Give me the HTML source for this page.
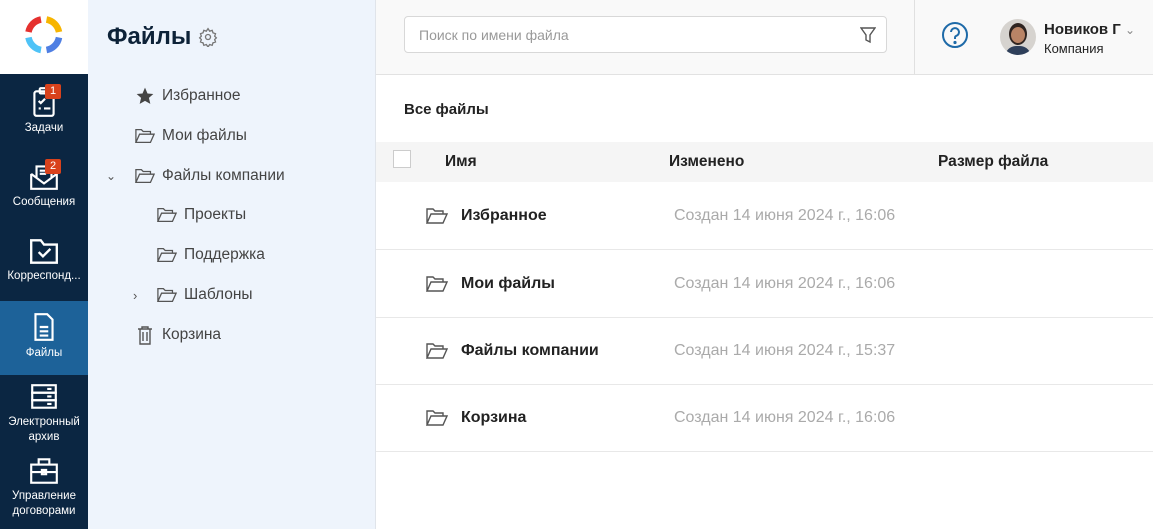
<!DOCTYPE html>
<html><head><meta charset="utf-8"><style>
*{box-sizing:border-box;margin:0;padding:0}
body{width:1153px;height:529px;overflow:hidden;font-family:"Liberation Sans",sans-serif;background:#fff;position:relative;color:#222}
.nav{position:absolute;left:0;top:0;width:88px;height:529px;background:#0b2642}
.logo{height:74px;background:#fff;position:relative}
.ni{position:absolute;left:0;width:88px;text-align:center;color:#fff;font-size:11.5px;line-height:15px}
.ni svg{display:block;margin:0 auto 3px}
.badge{position:absolute;left:45px;width:16px;height:15px;background:#d9421c;color:#fff;font-size:11px;line-height:15px;border-radius:2px;text-align:center}
.tree{position:absolute;left:88px;top:0;width:288px;height:529px;background:#eef4fc;border-right:1px solid #e0e4ea}
.tree h1{position:absolute;left:19px;top:23px;font-size:24px;font-weight:bold;color:#0d2238}
.ti{position:absolute;font-size:15.5px;color:#444;display:flex;align-items:center;gap:7px;height:20px}
.main{position:absolute;left:376px;top:0;right:0;bottom:0}
.top{height:75px;background:#f9f9f9;border-bottom:1px solid #e2e2e2;position:relative}
.search{position:absolute;left:28px;top:16px;width:483px;height:37px;border:1px solid #d8d8d8;border-radius:4px;background:#fff;font-size:14px;color:#999;padding:10px 14px}
.sep{position:absolute;left:538px;top:0;width:1px;height:74px;background:#e0e0e0}
.row{position:absolute;left:0;right:0;height:68px;border-bottom:1px solid #e8e8e8}
.rn{position:absolute;left:85px;top:25px;font-size:16px;font-weight:bold;color:#222}
.rd{position:absolute;left:298px;top:25px;font-size:16px;color:#aaa}
.rf{position:absolute;left:50px;top:26px}
</style></head><body>
<div class="nav">
 <div class="logo"><svg width="88" height="74" viewBox="0 0 88 74"><g fill="none" stroke-width="6.5"><path d="M28.5 32 A15.5 15.5 0 0 1 41 19.5" stroke="#e5312f"/><path d="M46.5 19.5 A15.5 15.5 0 0 1 59 32" stroke="#f7b500"/><path d="M59 37.5 A15.5 15.5 0 0 1 46.5 50" stroke="#4f7fe3"/><path d="M41 50 A15.5 15.5 0 0 1 28.5 37.5" stroke="#4fc3f7"/></g></svg></div>
 <div class="ni" style="top:86px"><svg width="28" height="32" viewBox="0 0 26 30" fill="none" stroke="#fff" stroke-width="2"><rect x="4" y="5" width="18" height="23" rx="2"/><rect x="9" y="2" width="8" height="5" rx="1"/><path d="M8 14l2 2 4-4M8 21h2M13 21h6"/></svg>Задачи</div>
 <div class="badge" style="top:84px">1</div>
 <div class="ni" style="top:160px"><svg width="32" height="32" viewBox="0 0 30 30" fill="none" stroke="#fff" stroke-width="2"><path d="M3 13v14h24V13"/><path d="M3 13l12 9 12-9"/><path d="M8 16V6h14v10M11 10h8M11 13h6"/></svg>Сообщения</div>
 <div class="badge" style="top:159px">2</div>
 <div class="ni" style="top:236px"><svg width="32" height="30" viewBox="0 0 30 28" fill="none" stroke="#fff" stroke-width="2.2"><path d="M3 4h9l3 4h12v17H3z"/><path d="M10 15l4 4 7-7"/></svg>Корреспонд...</div>
 <div style="position:absolute;top:301px;width:88px;height:74px;background:#1d6299"></div>
 <div class="ni" style="top:311px"><svg width="24" height="32" viewBox="0 0 22 30" fill="none" stroke="#fff" stroke-width="2"><path d="M3 3h11l5 5v19H3z"/><path d="M7 15h8M7 19h8M7 23h8"/></svg>Файлы</div>
 <div class="ni" style="top:382px"><svg width="30" height="30" viewBox="0 0 28 28" fill="none" stroke="#fff" stroke-width="2"><rect x="3" y="3" width="22" height="7"/><rect x="3" y="10" width="22" height="7"/><rect x="3" y="17" width="22" height="7"/><path d="M17 6.5h4M17 13.5h4M17 20.5h4"/></svg>Электронный<br>архив</div>
 <div class="ni" style="top:456px"><svg width="32" height="30" viewBox="0 0 30 28" fill="none" stroke="#fff" stroke-width="2"><rect x="3" y="8" width="24" height="17"/><path d="M10 8V3h10v5M3 15h24"/><rect x="13" y="13" width="4" height="4"/></svg>Управление<br>договорами</div>
</div>
<div class="tree">
 <h1>Файлы</h1>
 <svg style="position:absolute;left:110px;top:27px" width="20" height="20" viewBox="0 0 24 24" fill="none" stroke="#777" stroke-width="1.6"><circle cx="12" cy="12" r="3"/><path d="M12 2l2 3 3-1 1 3 3 1-1 3 2 2-2 2 1 3-3 1-1 3-3-1-2 3-2-3-3 1-1-3-3-1 1-3-2-2 2-2-1-3 3-1 1-3 3 1z"/></svg>
 <div class="ti" style="left:47px;top:86px"><svg width="20" height="20" viewBox="0 0 24 24" fill="#444"><path d="M12 2l3 7 7 .6-5.3 4.7 1.7 7.2L12 17.8 5.6 21.5l1.7-7.2L2 9.6 9 9z"/></svg>Избранное</div>
 <div class="ti" style="left:47px;top:126px"><svg width="20" height="16" viewBox="0 0 22 16" fill="none" stroke="#555" stroke-width="1.4"><path d="M1 15V1h6l2 2h8v3M1 15l4-9h16l-4 9z"/></svg>Мои файлы</div>
 <div class="ti" style="left:18px;top:166px"><span style="width:22px;color:#555;font-size:12px">&#8964;</span><svg width="20" height="16" viewBox="0 0 22 16" fill="none" stroke="#555" stroke-width="1.4"><path d="M1 15V1h6l2 2h8v3M1 15l4-9h16l-4 9z"/></svg>Файлы компании</div>
 <div class="ti" style="left:69px;top:205px"><svg width="20" height="16" viewBox="0 0 22 16" fill="none" stroke="#555" stroke-width="1.4"><path d="M1 15V1h6l2 2h8v3M1 15l4-9h16l-4 9z"/></svg>Проекты</div>
 <div class="ti" style="left:69px;top:245px"><svg width="20" height="16" viewBox="0 0 22 16" fill="none" stroke="#555" stroke-width="1.4"><path d="M1 15V1h6l2 2h8v3M1 15l4-9h16l-4 9z"/></svg>Поддержка</div>
 <div class="ti" style="left:45px;top:285px"><span style="width:17px;color:#555;font-size:13px">&#8250;</span><svg width="20" height="16" viewBox="0 0 22 16" fill="none" stroke="#555" stroke-width="1.4"><path d="M1 15V1h6l2 2h8v3M1 15l4-9h16l-4 9z"/></svg>Шаблоны</div>
 <div class="ti" style="left:47px;top:325px"><svg width="20" height="20" viewBox="0 0 20 20" fill="none" stroke="#555" stroke-width="1.4"><path d="M3 4h14M7 4V2h6v2M5 4v15h10V4M8 7v9M12 7v9"/></svg>Корзина</div>
</div>
<div class="main">
 <div class="top">
  <div class="search">Поиск по имени файла
   <svg style="position:absolute;right:10px;top:9px" width="16" height="18" viewBox="0 0 16 18" fill="none" stroke="#555" stroke-width="1.4"><path d="M1 2h14l-5 7v7l-4-2V9z"/></svg></div>
  <div class="sep"></div>
  <svg style="position:absolute;left:565px;top:21px" width="28" height="28" viewBox="0 0 28 28" fill="none" stroke="#1e6aa8" stroke-width="2"><circle cx="14" cy="14" r="12"/><path d="M10 11a4 4 0 1 1 5 4c-1 .5-1 1-1 3"/><circle cx="14" cy="21.5" r=".6" fill="#1e6aa8"/></svg>
  <div style="position:absolute;left:624px;top:19px;width:36px;height:36px;border-radius:50%;background:#d6d3cf;overflow:hidden">
   <div style="position:absolute;left:9px;top:4px;width:18px;height:22px;border-radius:50%;background:#2f2420"></div>
   <div style="position:absolute;left:11px;top:8px;width:14px;height:16px;border-radius:50%;background:#b98466"></div>
   <div style="position:absolute;bottom:-2px;left:5px;width:26px;height:11px;background:#2e3f5a;border-radius:12px 12px 0 0"></div></div>
  <div style="position:absolute;left:668px;top:21px;font-size:15px;font-weight:bold;color:#222">Новиков Г <span style="font-weight:normal;color:#888;font-size:12px">&#8964;</span></div>
  <div style="position:absolute;left:668px;top:41px;font-size:13px;color:#222">Компания</div>
 </div>
 <div style="position:absolute;left:28px;top:101px;font-size:15px;font-weight:bold;color:#222">Все файлы</div>
 <div style="position:absolute;left:0;right:0;top:142px;height:40px;background:#f5f5f5;font-size:15.5px;font-weight:bold;color:#222">
  <div style="position:absolute;left:17px;top:8px;width:18px;height:18px;border:1px solid #ccc;background:#fff"></div>
  <div style="position:absolute;left:69px;top:11px">Имя</div>
  <div style="position:absolute;left:293px;top:11px">Изменено</div>
  <div style="position:absolute;left:562px;top:11px">Размер файла</div>
 </div>
 <div class="row" style="top:182px"><svg class="rf" width="22" height="16" viewBox="0 0 22 16" fill="none" stroke="#555" stroke-width="1.4"><path d="M1 15V1h6l2 2h8v3M1 15l4-9h16l-4 9z"/></svg><div class="rn">Избранное</div><div class="rd">Создан 14 июня 2024 г., 16:06</div></div>
 <div class="row" style="top:250px"><svg class="rf" width="22" height="16" viewBox="0 0 22 16" fill="none" stroke="#555" stroke-width="1.4"><path d="M1 15V1h6l2 2h8v3M1 15l4-9h16l-4 9z"/></svg><div class="rn">Мои файлы</div><div class="rd">Создан 14 июня 2024 г., 16:06</div></div>
 <div class="row" style="top:317px"><svg class="rf" width="22" height="16" viewBox="0 0 22 16" fill="none" stroke="#555" stroke-width="1.4"><path d="M1 15V1h6l2 2h8v3M1 15l4-9h16l-4 9z"/></svg><div class="rn">Файлы компании</div><div class="rd">Создан 14 июня 2024 г., 15:37</div></div>
 <div class="row" style="top:384px"><svg class="rf" width="22" height="16" viewBox="0 0 22 16" fill="none" stroke="#555" stroke-width="1.4"><path d="M1 15V1h6l2 2h8v3M1 15l4-9h16l-4 9z"/></svg><div class="rn">Корзина</div><div class="rd">Создан 14 июня 2024 г., 16:06</div></div>
</div>
</body></html>
